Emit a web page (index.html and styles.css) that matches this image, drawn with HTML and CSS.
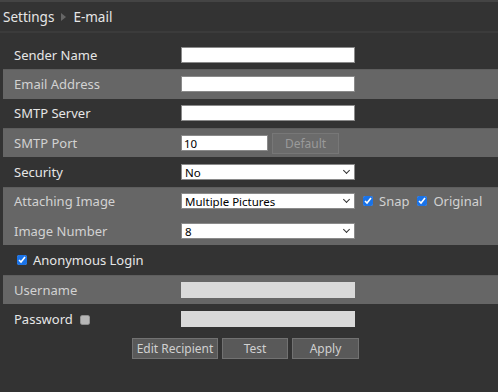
FILE: index.html
```html
<!DOCTYPE html>
<html lang="en">
<head>
    <meta charset="UTF-8">
    <title>Settings - E-mail</title>
    <link rel="stylesheet" href="styles.css">
</head>
<body>
    <div class="topline"></div>
    <div class="crumbs">
        <span>Settings</span>
        <span class="crumb-arrow"></span>
        <span>E-mail</span>
    </div>

    <form class="mail-form">
        <div class="row">
            <label class="name">Sender Name</label>
            <input class="field" type="text">
        </div>
        <div class="row alt">
            <label class="name">Email Address</label>
            <input class="field" type="text">
        </div>
        <div class="row">
            <label class="name">SMTP Server</label>
            <input class="field" type="text">
        </div>
        <div class="row alt">
            <label class="name">SMTP Port</label>
            <input class="field short" type="text" value="10">
            <button type="button" class="btn btn-default">Default</button>
        </div>
        <div class="row">
            <label class="name">Security</label>
            <div class="pick">
                <select class="field">
                    <option>No</option>
                    <option>SSL</option>
                    <option>TLS</option>
                </select>
            </div>
        </div>
        <div class="group">
            <div class="row">
                <label class="name">Attaching Image</label>
                <div class="pick">
                    <select class="field">
                        <option>Multiple Pictures</option>
                        <option>Single Picture</option>
                    </select>
                </div>
                <label class="tick"><input type="checkbox" checked> Snap</label>
                <label class="tick"><input type="checkbox" checked> Original</label>
            </div>
            <div class="row">
                <label class="name">Image Number</label>
                <div class="pick">
                    <select class="field">
                        <option>8</option>
                    </select>
                </div>
            </div>
        </div>
        <div class="row">
            <label class="tick anon"><input type="checkbox" checked> Anonymous Login</label>
        </div>
        <div class="row alt">
            <label class="name">Username</label>
            <input class="field" type="text" disabled>
        </div>
        <div class="row">
            <label class="name">Password <input class="pw-show" type="checkbox" disabled></label>
            <input class="field" type="password" disabled>
        </div>

        <div class="actions">
            <button type="button" class="btn btn-recipient">Edit Recipient</button>
            <button type="button" class="btn btn-test">Test</button>
            <button type="button" class="btn btn-apply">Apply</button>
        </div>
    </form>
</body>
</html>
```

FILE: styles.css
```css
body {
    margin: 0;
    background-color: #333333;
    color: #e6e6e6;
    font-family: "Noto Sans", "Open Sans", sans-serif;
    font-size: 13px;
}

.topline {
    height: 2px;
    background-color: #444444;
}

.crumbs {
    height: 29px;
    display: flex;
    align-items: center;
    gap: 7px;
    padding-left: 3px;
    border-bottom: 2px solid #3b3b3b;
    font-size: 13.5px;
    color: #e6e6e6;
}

.crumb-arrow {
    width: 0;
    height: 0;
    border-top: 4px solid transparent;
    border-bottom: 4px solid transparent;
    border-left: 5px solid #666666;
}

.mail-form {
    padding-top: 7px;
}

.row {
    height: 29.33px;
    display: flex;
    align-items: center;
    margin-left: 3px;
    padding-left: 11px;
}

.alt,
.group {
    background-color: #666666;
    color: #d2d2d2;
}

.alt {
    border-top: 1px solid #5e5e5e;
    box-sizing: border-box;
}

.group {
    margin-left: 3px;
    box-shadow: inset 0 1px 0 #5e5e5e;
}

.group .row {
    margin-left: 0;
}

.name {
    width: 167px;
    flex: none;
}

.field {
    width: 174px;
    height: 16px;
    box-sizing: border-box;
    border: 1px solid #8a8a8a;
    background: #ffffff;
    color: #000000;
    font-family: "Noto Sans", "Open Sans", sans-serif;
    font-size: 11.5px;
    padding: 0 2px;
    margin: 0;
    outline: none;
}

.field.short {
    width: 87px;
}

.field:disabled {
    background: #d9d9d9;
    border-color: #d9d9d9;
}

.pick {
    position: relative;
    display: flex;
}

.pick select {
    appearance: none;
    padding-left: 3px;
}

.pick::after {
    content: "";
    position: absolute;
    right: 6px;
    top: 4px;
    width: 4px;
    height: 4px;
    border-right: 1px solid #333333;
    border-bottom: 1px solid #333333;
    transform: rotate(45deg);
    pointer-events: none;
}

.tick {
    display: flex;
    align-items: center;
    gap: 6px;
    margin-left: 8px;
}

.tick input,
.pw-show {
    width: 10px;
    height: 10px;
    margin: 0;
    accent-color: #1a73e8;
}

.anon {
    margin-left: 3px;
    color: #e6e6e6;
}

.pw-show {
    margin-left: 4px;
    vertical-align: -1px;
}

.btn {
    height: 21px;
    border: 1px solid #727272;
    background-color: #595959;
    color: #d0d0d0;
    font-family: "Noto Sans", "Open Sans", sans-serif;
    font-size: 12px;
    padding: 0;
    cursor: pointer;
}

.btn-default {
    width: 67px;
    margin-left: 4px;
    background-color: #6b6b6b;
    border-color: #777777;
    color: #9a9a9a;
}

.btn-recipient {
    width: 86px;
}

.btn-test {
    width: 66px;
}

.btn-apply {
    width: 67px;
}

.actions {
    display: flex;
    gap: 4px;
    padding: 5px 0 0 132px;
}
```
